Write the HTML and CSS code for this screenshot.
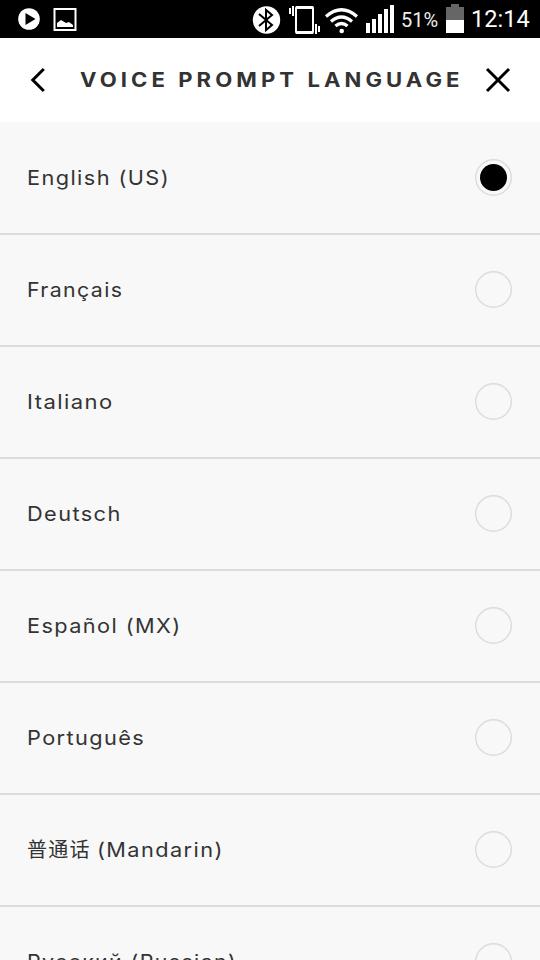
FILE: index.html
```
<!DOCTYPE html>
<html lang="en">
<head>
<meta charset="utf-8">
<title>Voice Prompt Language</title>
<link rel="stylesheet" href="styles.css">
</head>
<body>
<div class="status">
<svg class="notifications" width="80" height="38" viewBox="0 0 80 38">
<circle cx="29" cy="19" r="10.8" fill="#fff"/><path d="M25.5 13v12l10-6z"/>
<path d="M54.500 9h21v21h-21z" fill="none" stroke="#fff" stroke-width="2"/><path d="M57 27v-4l4-3 5 3 3-1 4 3v2z" fill="#fff"/>
</svg>
<svg class="signals" width="145" height="38" viewBox="250 0 145 38">
<circle cx="266.500" cy="20" r="13.700" fill="#fff"/>
<path d="M259 14l13 11-6 5V10l6 5-13 11" fill="none" stroke="#000" stroke-width="2"/>
<rect x="296" y="7" width="17" height="26" rx="1" fill="none" stroke="#fff" stroke-width="2"/>
<path d="M296 7.500h17M296 32.500h17" stroke="#fff" stroke-width="3"/>
<path d="M290 8v6M293 6v10M316 24v10M319 26v6" stroke="#fff" stroke-width="2"/>
<g fill="none" stroke="#fff" stroke-width="3.300"><path d="M326 16.500Q341.500 3 357 16.500"/><path d="M331 21.500Q341.500 12.500 352 21.500"/><path d="M335.500 26Q341.500 21 347.500 26"/></g>
<circle cx="341.700" cy="31" r="2.300" fill="#fff"/>
<path d="M366 23h4v10h-4zM372 19h4v14h-4zM378 14h4v19h-4zM384 9h4v24h-4zM390 5h4v28h-4z" fill="#fff"/>
</svg>
<span class="percent">51%</span>
<svg class="battery" width="18" height="38"><path d="M0 7h5V4h8v3h5v13H0z" fill="#666"/><path d="M0 20h18v13H0z" fill="#fff"/></svg>
<span class="time">12:14</span>
</div>
<header class="header">
<svg class="back" width="18" height="28" viewBox="0 0 18 28"><path d="M15.800 3L4.800 14l11 11" fill="none" stroke="#000" stroke-width="3"/></svg>
<h1 class="title"><span class="wide">VOICE PROMPT LANGUAGE</span></h1>
<svg class="close" width="28" height="28" viewBox="0 0 28 28"><path d="M3 3l22 22M25 3L3 25" stroke="#000" stroke-width="3"/></svg>
</header>
<main class="list">
<div class="row"><span class="name"><span class="wide">English (US)</span></span><svg class="radio" width="37" height="37"><circle class="ring" cx="18.500" cy="18.500" r="17.800"/><circle cx="18.500" cy="18.500" r="13.500"/></svg></div>
<div class="row"><span class="name"><span class="wide fr">Français</span></span><svg class="radio" width="37" height="37"><circle class="ring" cx="18.500" cy="18.500" r="17.800"/></svg></div>
<div class="row"><span class="name"><span class="wide it">Italiano</span></span><svg class="radio" width="37" height="37"><circle class="ring" cx="18.500" cy="18.500" r="17.800"/></svg></div>
<div class="row"><span class="name"><span class="wide">Deutsch</span></span><svg class="radio" width="37" height="37"><circle class="ring" cx="18.500" cy="18.500" r="17.800"/></svg></div>
<div class="row"><span class="name"><span class="wide">Español (MX)</span></span><svg class="radio" width="37" height="37"><circle class="ring" cx="18.500" cy="18.500" r="17.800"/></svg></div>
<div class="row"><span class="name"><span class="wide">Português</span></span><svg class="radio" width="37" height="37"><circle class="ring" cx="18.500" cy="18.500" r="17.800"/></svg></div>
<div class="row"><span class="name">普通话&nbsp;<span class="wide zh">(Mandarin)</span></span><svg class="radio" width="37" height="37"><circle class="ring" cx="18.500" cy="18.500" r="17.800"/></svg></div>
<div class="row"><span class="name"><span class="wide ru">Русский (Russian)</span></span><svg class="radio" width="37" height="37"><circle class="ring" cx="18.500" cy="18.500" r="17.800"/></svg></div>
</main>
</body>
</html>
```
FILE: styles.css
```
* { box-sizing: border-box; }
html { overflow: hidden; }
body { margin: 0; height: 960px; overflow: hidden; background: #f8f8f8; color: #333; font-family: Inter, "Noto Sans CJK SC", sans-serif; }
svg { display: block; flex: none; }
.status { display: flex; height: 38px; background: #000; color: #fff; font-family: Roboto, sans-serif; }
.signals { margin-left: 170px; }
.percent { width: 51px; padding-left: 6px; font-size: 20px; line-height: 40px; color: #eee; }
.time { padding-left: 7px; font-size: 23.6px; line-height: 39px; white-space: nowrap; }
.header { display: flex; align-items: center; height: 84px; background: #fff; padding-left: 28px; }
.title { width: 404px; margin: 0 0 0 34px; font-size: 19.5px; font-weight: 700; line-height: 28px; letter-spacing: 3.6px; white-space: nowrap; }
.wide { display: inline-block; transform: scaleX(1.086); transform-origin: left; }
.title .wide { transform: scaleX(1.132); }
.wide.fr { transform: scaleX(1.065); }
.wide.it { transform: scaleX(1.1); }
.wide.zh { margin-left: -1px; }
.wide.ru { transform: scaleX(1.067); }
.list { height: 838px; overflow: hidden; }
.row { display: flex; align-items: center; justify-content: space-between; height: 112px; padding: 0 28px 0 27px; border-bottom: 2px solid #dcdcdc; }
.row:first-child { height: 113px; }
.row:last-child { height: 111px; }
.name { font-size: 20px; line-height: 30px; letter-spacing: 1.3px; white-space: nowrap; }
.row + .row .radio { margin-bottom: 1px; }
.ring { fill: none; stroke: #dcdcdc; stroke-width: 1.4; }
```
